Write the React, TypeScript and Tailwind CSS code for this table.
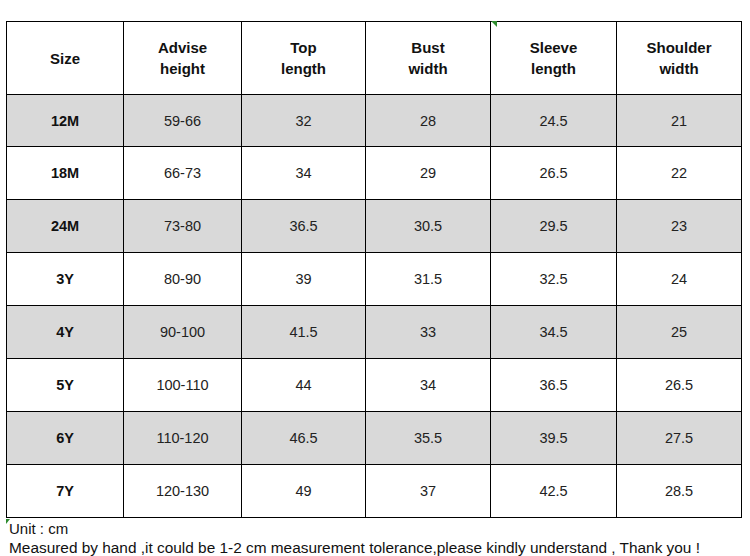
import React from "react";

const header = [
  ["Size"],
  ["Advise", "height"],
  ["Top", "length"],
  ["Bust", "width"],
  ["Sleeve", "length"],
  ["Shoulder", "width"],
];

const rows = [
  ["12M", "59-66", "32", "28", "24.5", "21"],
  ["18M", "66-73", "34", "29", "26.5", "22"],
  ["24M", "73-80", "36.5", "30.5", "29.5", "23"],
  ["3Y", "80-90", "39", "31.5", "32.5", "24"],
  ["4Y", "90-100", "41.5", "33", "34.5", "25"],
  ["5Y", "100-110", "44", "34", "36.5", "26.5"],
  ["6Y", "110-120", "46.5", "35.5", "39.5", "27.5"],
  ["7Y", "120-130", "49", "37", "42.5", "28.5"],
];

export default function App() {
  return (
    <div className="w-[750px] h-[556px] bg-white overflow-hidden font-['Liberation_Sans',Arial,sans-serif] text-black">
      <div className="relative ml-[6px] mt-[21px] w-[736px] border-l border-t border-black grid grid-cols-[117px_118px_124px_125px_126px_125px]">
        {header.map((h, i) => (
          <div
            key={i}
            className="h-[73px] border-r border-b border-black flex flex-col items-center justify-center text-[15px] font-bold leading-[21px] text-[#111]"
          >
            {h.map((l) => (
              <span key={l}>{l}</span>
            ))}
          </div>
        ))}
        {rows.map((r, ri) =>
          r.map((c, ci) => (
            <div
              key={ri + "-" + ci}
              className={`${ri === 0 ? "h-[52px]" : "h-[53px]"} border-r border-b border-black flex items-center justify-center pt-[2px] text-[14.5px] ${
                ri % 2 === 0 ? "bg-[#d9d9d9]" : "bg-white"
              } ${ci === 0 ? "font-bold text-[#111]" : "text-[#222]"}`}
            >
              {c}
            </div>
          ))
        )}
        <svg className="absolute left-[484px] top-[-1px]" width="6" height="6" viewBox="0 0 6 6">
          <polygon points="0,0 6,0 6,6" fill="#2e8b2e" />
        </svg>
        <svg className="absolute left-[-1px] bottom-[-6px]" width="4" height="5" viewBox="0 0 4 5">
          <polygon points="0,0 4,0 0,5" fill="#2e8b2e" />
        </svg>
      </div>
      <div className="pl-[9px] leading-[20px] text-[#111]">
        <div className="text-[15px] mt-[1px]">Unit : cm</div>
        <div className="text-[15.4px] -mt-[1px]">
          Measured by hand ,it could be 1-2 cm measurement tolerance,please kindly understand , Thank you !
        </div>
      </div>
    </div>
  );
}
